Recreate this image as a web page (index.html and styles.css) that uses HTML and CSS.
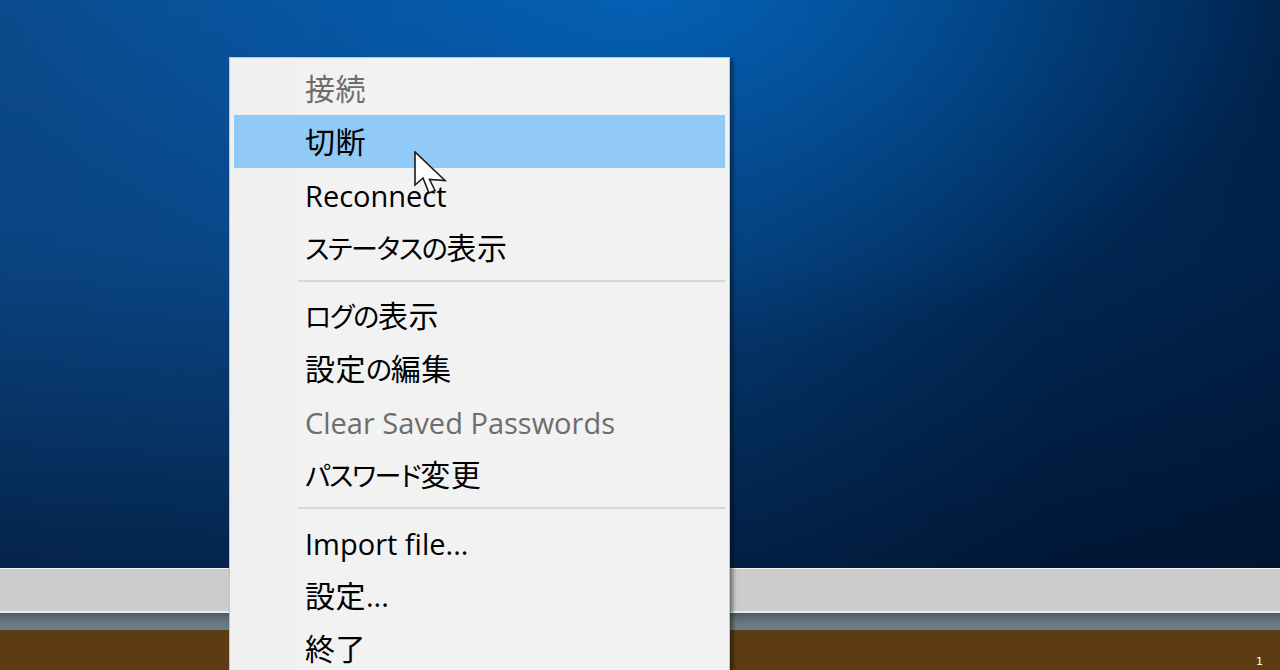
FILE: index.html
```html
<!DOCTYPE html>
<html lang="ja">
<head>
<meta charset="utf-8">
<title>Menu</title>
<link rel="stylesheet" href="styles.css">
</head>
<body>
<div class="screen">
  <div class="desktop"></div>
  <div class="taskbar"></div>
  <div class="strip"></div>
  <div class="ground"><span class="mark">1</span></div>

  <ul class="menu">
    <li class="item disabled">接続</li>
    <li class="item hover">切断</li>
    <li class="item en">Reconnect</li>
    <li class="item"><span class="kana">ステータスの</span>表示</li>
    <li class="sep"></li>
    <li class="item"><span class="kana">ログの</span>表示</li>
    <li class="item">設定<span class="kana">の</span>編集</li>
    <li class="item en disabled">Clear Saved Passwords</li>
    <li class="item"><span class="kana">パスワード</span>変更</li>
    <li class="sep"></li>
    <li class="item en">Import file...</li>
    <li class="item">設定<span class="dots">...</span></li>
    <li class="item">終了</li>
  </ul>

  <svg class="cursor" width="36" height="48" viewBox="0 0 36 48">
    <path d="M1 1 V34 L9 27 L15 42 L21 39.5 L15.5 28.5 L31 29.5 Z" fill="#ffffff" stroke="#1a1a1a" stroke-width="1.6" stroke-linejoin="miter"/>
  </svg>
</div>
</body>
</html>
```

FILE: styles.css
```css
html, body {
  margin: 0;
  padding: 0;
}
body {
  width: 1280px;
  height: 670px;
  overflow: hidden;
  font-family: "Open Sans", "Noto Sans CJK JP", sans-serif;
}
.screen {
  position: relative;
  width: 1280px;
  height: 670px;
  overflow: hidden;
  display: flex;
  flex-direction: column;
}
.desktop {
  height: 568px;
  background:
    linear-gradient(to bottom, rgba(0, 12, 32, 0) 0%, rgba(0, 12, 32, 0.1) 45%, rgba(0, 10, 30, 0.6) 100%),
    radial-gradient(ellipse 640px 360px at 640px 0px, rgba(4, 96, 180, 1) 0%, rgba(4, 92, 174, 0.55) 50%, rgba(4, 90, 170, 0) 100%),
    linear-gradient(to right, #0b4a8c 0%, #0a4f96 35%, #043c76 62%, #002b5a 82%, #00244e 100%);
}
.taskbar {
  height: 42px;
  background: #cccccc;
  border-top: 1px solid #f2f2f2;
  border-bottom: 2px solid #ececec;
}
.strip {
  height: 17px;
  background: linear-gradient(to bottom, #4b5a62 0%, #66767e 50%, #6f7f87 100%);
}
.ground {
  flex: 1;
  background: #5d3b13;
  display: flex;
  justify-content: flex-end;
  align-items: flex-end;
}
.mark {
  color: #ffffff;
  font-family: "DejaVu Sans", sans-serif;
  font-size: 11px;
  line-height: 12px;
  margin-right: 17px;
  margin-bottom: 2px;
}
.menu {
  position: absolute;
  left: 229px;
  top: 57px;
  width: 501px;
  height: 630px;
  box-sizing: border-box;
  margin: 0;
  padding: 4px;
  list-style: none;
  border: 1px solid #c4c4c4;
  background: linear-gradient(to right, #f0f0f0 0, #f0f0f0 67px, #f2f2f2 67px);
  box-shadow: 3px 3px 4px rgba(0, 0, 0, 0.45);
}
.item {
  height: 53px;
  line-height: 51px;
  padding-left: 71px;
  box-sizing: border-box;
  font-family: "Noto Sans CJK JP", "Open Sans", sans-serif;
  font-size: 30px;
  letter-spacing: 0.5px;
  color: #000000;
  font-feature-settings: "palt" 1;
  white-space: nowrap;
}
.item.en {
  padding-top: 1px;
  line-height: 53px;
}
.item.en,
.dots {
  font-family: "Open Sans", "Noto Sans CJK JP", sans-serif;
  font-size: 29px;
  letter-spacing: 0;
}
.kana {
  font-size: 27px;
  letter-spacing: -1.3px;
}
.item.hover {
  background: #91c9f7;
}
.item.disabled {
  color: #6d6d6d;
}
.sep {
  height: 15px;
  box-sizing: border-box;
  padding-top: 6px;
  margin-left: 64px;
}
.sep::before {
  content: "";
  display: block;
  height: 2px;
  background: #d7d7d7;
}
.cursor {
  position: absolute;
  left: 414px;
  top: 151px;
}
```
